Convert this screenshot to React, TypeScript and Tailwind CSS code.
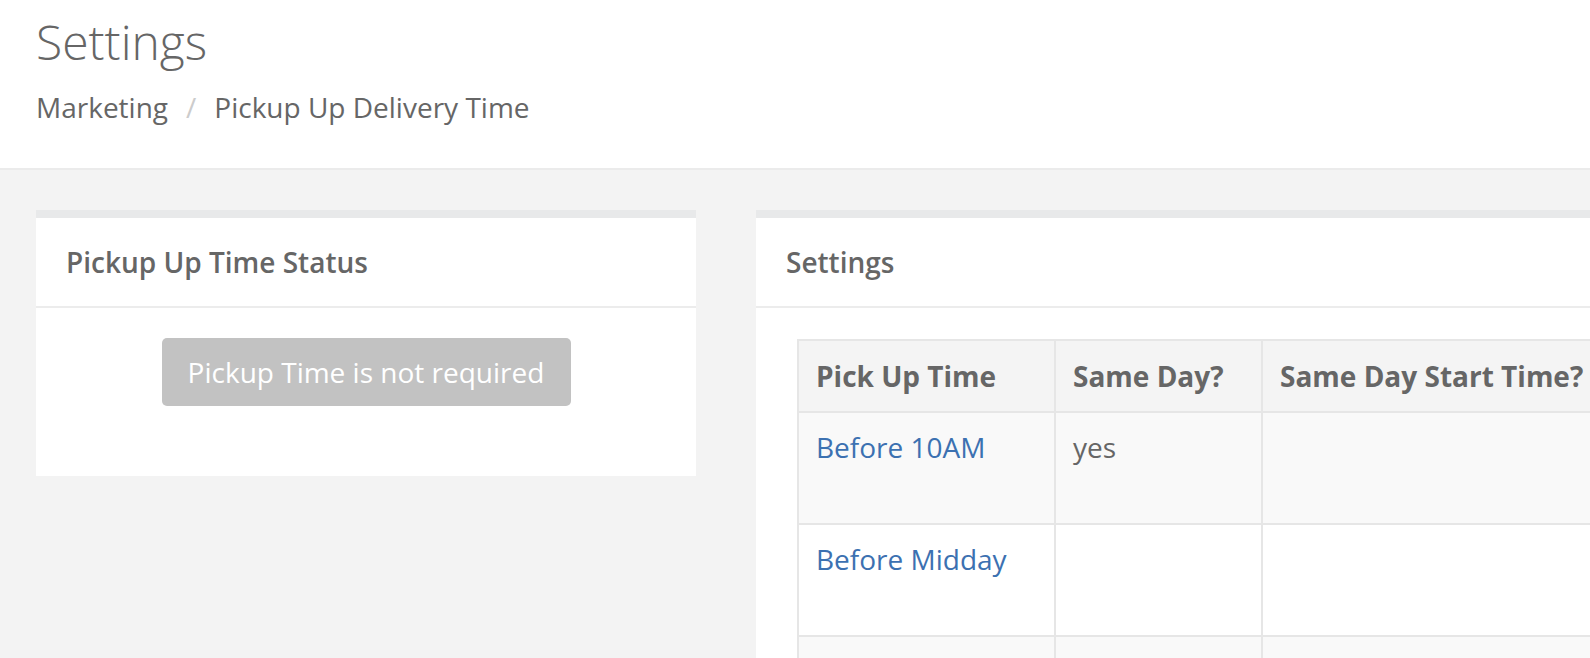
import React from "react";

const rows = [
  { time: "Before 10AM", same: "yes", start: "", striped: true },
  { time: "Before Midday", same: "", start: "", striped: false },
  { time: "", same: "", start: "", striped: true },
];

const Panel = ({ title, width, children }: { title: string; width: string; children: React.ReactNode }) => (
  <div className={`${width} shrink-0 border-t-8 border-[#e8e9ea] bg-white`}>
    <div className="flex h-[90px] items-center border-b-2 border-[#ececec] px-[30px]">
      <h2 className="text-[28px] font-semibold text-[#666666]">{title}</h2>
    </div>
    {children}
  </div>
);

export default function App() {
  return (
    <div
      className="h-[658px] w-[1590px] overflow-hidden bg-[#f3f3f3] text-[#666666]"
      style={{ fontFamily: '"Open Sans", "Liberation Sans", sans-serif' }}
    >
      <header className="h-[170px] border-b-2 border-[#ebebeb] bg-white px-[36px] pt-[15px]">
        <h1 className="text-[48px] font-light leading-[53px] text-[#666666]">Settings</h1>
        <nav className="mt-[19px] flex items-center text-[28px] leading-[40px] text-[#666666]">
          <span>Marketing</span>
          <span className="px-[18px] text-[#cccccc]">/</span>
          <span>Pickup Up Delivery Time</span>
        </nav>
      </header>

      <main className="flex items-start gap-[60px] px-[36px] pt-[40px]">
        <Panel title="Pickup Up Time Status" width="w-[660px]">
          <div className="flex justify-center pt-[30px] pb-[70px]">
            <button className="h-[68px] w-[409px] rounded-[5px] bg-[#c2c2c2] text-[28px] text-white">
              Pickup Time is not required
            </button>
          </div>
        </Panel>

        <Panel title="Settings" width="w-[1100px]">
          <div className="px-[41px] pt-[31px]">
            <table className="w-full table-fixed border-collapse text-[28px] leading-[40px]">
              <colgroup>
                <col className="w-[257px]" />
                <col className="w-[207px]" />
                <col />
              </colgroup>
              <thead>
                <tr className="h-[72px] bg-[#f4f4f4]">
                  <th className="border-2 border-[#e6e6e6] px-[17px] text-left font-bold">Pick Up Time</th>
                  <th className="border-2 border-[#e6e6e6] px-[17px] text-left font-bold">Same Day?</th>
                  <th className="border-2 border-[#e6e6e6] px-[17px] text-left font-bold">Same Day Start Time?</th>
                </tr>
              </thead>
              <tbody>
                {rows.map((r, i) => (
                  <tr key={i} className={r.striped ? "h-[112px] bg-[#f9f9f9]" : "h-[112px] bg-white"}>
                    <td className="border-2 border-[#e6e6e6] px-[17px] pt-[14px] align-top text-[#3c71b1]">{r.time}</td>
                    <td className="border-2 border-[#e6e6e6] px-[17px] pt-[14px] align-top">{r.same}</td>
                    <td className="border-2 border-[#e6e6e6] px-[17px] pt-[14px] align-top">{r.start}</td>
                  </tr>
                ))}
              </tbody>
            </table>
          </div>
        </Panel>
      </main>
    </div>
  );
}
